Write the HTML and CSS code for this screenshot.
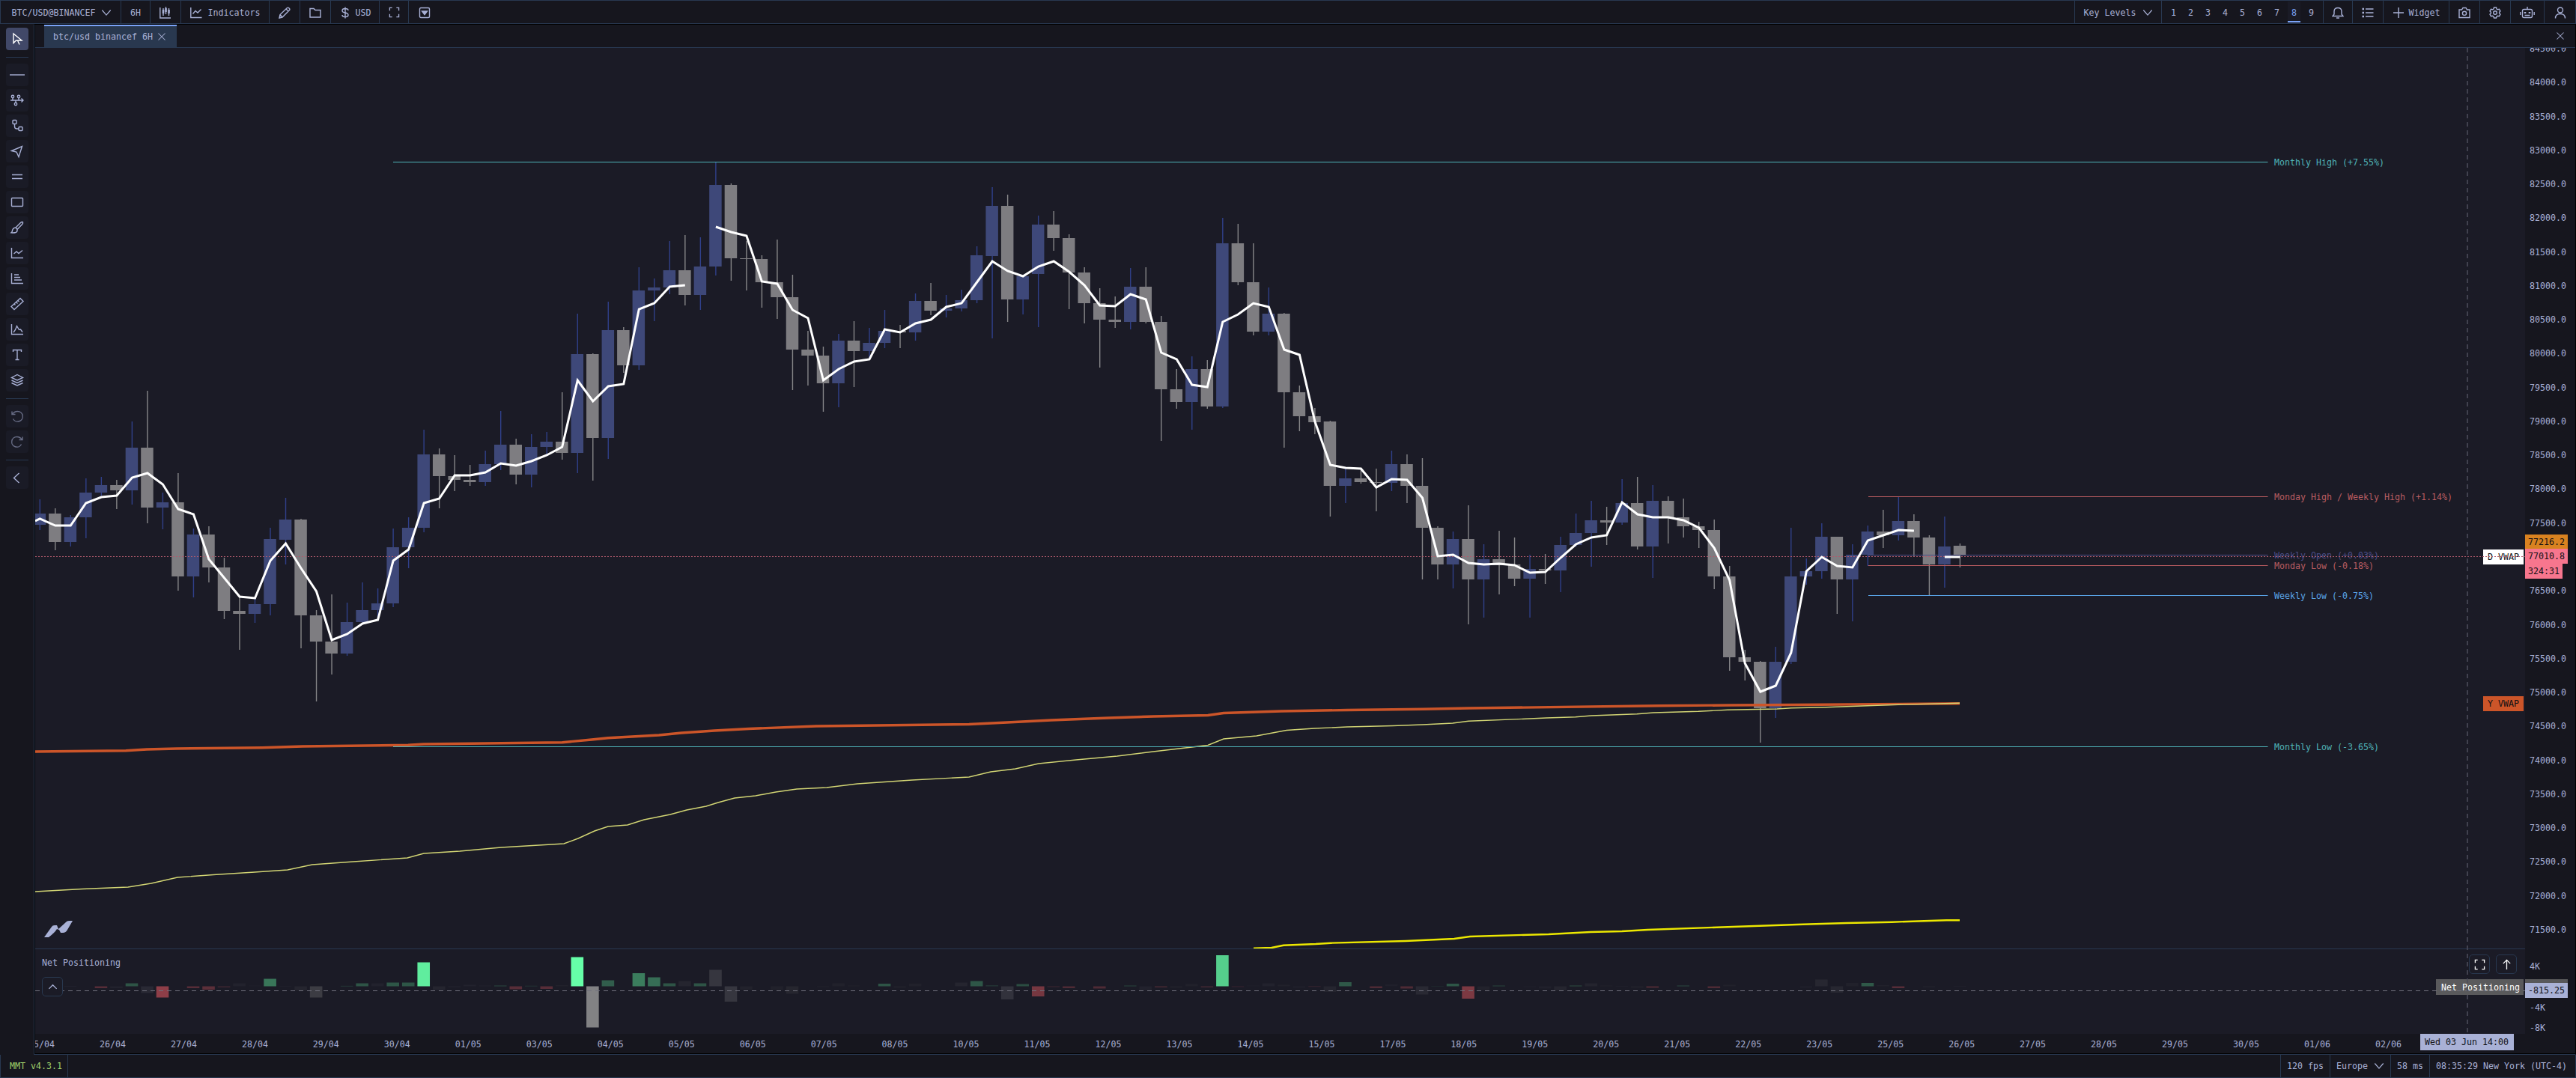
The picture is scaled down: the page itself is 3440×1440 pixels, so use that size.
FILE: index.html
```html
<!DOCTYPE html>
<html lang="en">
  <head>
    <meta charset="UTF-8" />
    <meta name="viewport" content="width=device-width, initial-scale=1.0" />
    <title>BTC/USD@BINANCEF 6H</title>
    <link rel="stylesheet" href="styles.css">
  </head>
  <body>
    <svg class="defs">
      <symbol id="i-chevron" viewBox="0 0 16 16"><path d="M1.5 4l6.5 7.5L14.500 4" /></symbol>
      <symbol id="i-candles" viewBox="0 0 16 16"><path d="M.8 1v14H15M5 2v10M8.500 0v10M12.500 2v10" /><path class="thick" d="M5 4v5M8.500 2v5M12.500 4v5" /></symbol>
      <symbol id="i-line" viewBox="0 0 16 16"><path d="M.8 1v13.500H15.500M3.500 9.500l3.500-4 3 2.500 4.500-4.500" /></symbol>
      <symbol id="i-pencil" viewBox="0 0 16 16"><path d="M1 15l1-4.500L11.500 1.500q1-.8 2 0l1 1q.8 1 0 2L5 14zM10 3l3 3M2 10.500L5 14" /></symbol>
      <symbol id="i-folder" viewBox="0 0 16 16"><path d="M1 2.500h5l2 2h7V14H1z" /></symbol>
      <symbol id="i-dollar" viewBox="0 0 16 16"><path d="M12 5q0-2.500-4-2.500T4 5.200q0 2 4 2.800t4 3q0 2.500-4 2.500T4 11M8 .5v15" /></symbol>
      <symbol id="i-full" viewBox="0 0 16 16"><path d="M1.500 5.500v-4H5M11 1.500h3.500v4M14.500 10.500v4H11M5 14.500H1.500v-4" /></symbol>
      <symbol id="i-boxdown" viewBox="0 0 16 16"><rect x="1.500" y="1.500" width="13" height="13" rx="1.500" /><path class="fill" d="M4.500 6h7L8 10.500z" /></symbol>
      <symbol id="i-bell" viewBox="0 0 16 16"><path d="M1 12.500h14l-2-2.500V6.500Q13 1.500 8 1.500T3 6.500V10zM6 15h4" /></symbol>
      <symbol id="i-list" viewBox="0 0 16 16"><path d="M5 3h10.500M5 8h10.500M5 13h10.500" /><path class="thick" d="M.5 3h2.500M.5 8h2.500M.5 13h2.500" /></symbol>
      <symbol id="i-plus" viewBox="0 0 16 16"><path d="M8 1v14M1 8h14" /></symbol>
      <symbol id="i-camera" viewBox="0 0 16 16"><path d="M1 4h3.500l1.500-2.500h4L11.500 4H15v10.500H1z" /><circle cx="8" cy="8.800" r="2.600" /></symbol>
      <symbol id="i-gear" viewBox="0 0 16 16"><path d="M6.500 1h3l.6 2 1.400.8 2-.5 1.500 2.600L13.600 7.300v1.400L15 10.100l-1.500 2.600-2-.5-1.400.8-.6 2h-3l-.6-2-1.400-.8-2 .5L1 10.100l1.400-1.400V7.300L1 5.900l1.500-2.600 2 .5L5.900 3z" /><circle cx="8" cy="8" r="2.300" /></symbol>
      <symbol id="i-robot" viewBox="0 0 20 16"><rect x="3.500" y="3.500" width="13" height="11" rx="2" /><path d="M10 0v3.500M.8 7v4M19.200 7v4M6.500 11.500h7" /><path class="thick" d="M7 7v2M13 7v2" /></symbol>
      <symbol id="i-user" viewBox="0 0 16 16"><circle cx="8" cy="4.500" r="3.500" /><path d="M1.500 15.500q0-6 6.500-6t6.500 6" /></symbol>
      <symbol id="i-x" viewBox="0 0 16 16"><path d="M2 2l12 12M14 2L2 14" /></symbol>
      <symbol id="i-cursor" viewBox="0 0 20 20"><path d="M5 3v12.500l3.500-3.500H16zM10.500 12l2.500 5.500" /></symbol>
      <symbol id="i-hline" viewBox="0 0 20 20"><path d="M0 10h20" /></symbol>
      <symbol id="i-path" viewBox="0 0 20 20"><path d="M1 10h17M4 6.500V10M12 6.500V10M8 10v3.500M15.500 7.500L18 10l-2.500 2.500" /><circle cx="4" cy="5" r="1.700" /><circle cx="12" cy="5" r="1.700" /><circle cx="8" cy="15" r="1.700" /></symbol>
      <symbol id="i-nodes" viewBox="0 0 20 20"><rect x="4" y="2.500" width="5" height="5" rx="1" /><rect x="12" y="11.500" width="5" height="5" rx="1" /><path d="M6.500 7.500V11q0 3 3 3H12" /></symbol>
      <symbol id="i-send" viewBox="0 0 20 20"><path d="M2.500 9.500L16.500 3.500 12 17.500 9 11z" /></symbol>
      <symbol id="i-parallel" viewBox="0 0 20 20"><path d="M3 7.500h14M3 12.500h14" /></symbol>
      <symbol id="i-rect" viewBox="0 0 20 20"><rect x="2.500" y="4.500" width="15" height="11" rx="1" /></symbol>
      <symbol id="i-brush" viewBox="0 0 20 20"><path d="M8 10l6.500-6.500q1.500-1.300 3-.8.5 1.500-1 3L10 12.500M8 10l2 2.500q.5 3-2 4-3 .8-6 .3 1.500-1 1.500-3 .8-3.300 4.500-3.800z" /></symbol>
      <symbol id="i-trend" viewBox="0 0 20 20"><path d="M2.500 3v13.500h15.500M5.500 11l3.500-3 3 2.500 5-4" /></symbol>
      <symbol id="i-profile" viewBox="0 0 20 20"><path d="M2.500 3v13.500h15.500M6 5h6M6 8.500h8M6 12h10" /></symbol>
      <symbol id="i-ruler" viewBox="0 0 20 20"><path d="M2 13.500L14 2.500l4 4-12 11zM6 10l1.500 1.500M8.500 7.500l2 2M11 5.500L12.500 7" /></symbol>
      <symbol id="i-peaks" viewBox="0 0 20 20"><path d="M2.500 3v13.500h15.500M5 14l2.500-3.500L9.500 5.500l3 5 2-.5 2.500 3.500" /></symbol>
      <symbol id="i-text" viewBox="0 0 20 20"><path d="M4.500 6V3.500h11V6M10 3.500v13M7.500 16.500h5" /></symbol>
      <symbol id="i-layers" viewBox="0 0 20 20"><path d="M10 2.500l7.500 4-7.500 3.500-7.500-3.500zM2.500 10l7.500 3.500 7.500-3.500M2.500 13.500L10 17l7.500-3.500" /></symbol>
      <symbol id="i-undo" viewBox="0 0 20 20"><path d="M3 3.500v4h4.500M3.500 7.500Q6 3.500 10.500 3.500A6.800 6.800 0 1 1 4.500 13.500" /></symbol>
      <symbol id="i-redo" viewBox="0 0 20 20"><path d="M17 3.500v4h-4.500M16.500 7.500Q14 3.500 9.500 3.500A6.800 6.800 0 1 0 15.500 13.500" /></symbol>
      <symbol id="i-left" viewBox="0 0 20 20"><path d="M12.500 4l-7 6.500 7 6.500" /></symbol>
      <symbol id="i-caret" viewBox="0 0 16 16"><path d="M2.500 10.500L8 5l5.500 5.500" /></symbol>
      <symbol id="i-up" viewBox="0 0 16 16"><path d="M8 15V1.500M3 6.500l5-5 5 5" /></symbol>
    </svg>

    <header class="topbar">
      <div class="cell symbol">BTC/USD@BINANCEF <svg class="icon chevron"><use href="#i-chevron" /></svg></div>
      <div class="cell">6H</div>
      <div class="cell"><svg class="icon"><use href="#i-candles" /></svg></div>
      <div class="cell indicators"><svg class="icon"><use href="#i-line" /></svg>Indicators</div>
      <div class="cell"><svg class="icon"><use href="#i-pencil" /></svg></div>
      <div class="cell"><svg class="icon"><use href="#i-folder" /></svg></div>
      <div class="cell usd"><svg class="icon"><use href="#i-dollar" /></svg>USD</div>
      <div class="cell narrow"><svg class="icon small"><use href="#i-full" /></svg></div>
      <div class="cell last"><svg class="icon"><use href="#i-boxdown" /></svg></div>
      <div class="spacer"></div>
      <div class="cell levels">Key Levels <svg class="icon chevron"><use href="#i-chevron" /></svg></div>
      <div class="cell pages">
        <span>1</span><span>2</span><span>3</span><span>4</span><span>5</span><span>6</span><span>7</span><span class="active">8</span><span>9</span>
      </div>
      <div class="cell narrow"><svg class="icon"><use href="#i-bell" /></svg></div>
      <div class="cell"><svg class="icon"><use href="#i-list" /></svg></div>
      <div class="cell widget"><svg class="icon"><use href="#i-plus" /></svg>Widget</div>
      <div class="cell"><svg class="icon"><use href="#i-camera" /></svg></div>
      <div class="cell"><svg class="icon gear"><use href="#i-gear" /></svg></div>
      <div class="cell robot"><svg class="icon"><use href="#i-robot" /></svg></div>
      <div class="cell"><svg class="icon"><use href="#i-user" /></svg></div>
    </header>

    <main class="main">
      <aside class="tools">
        <button class="tool active"><svg><use href="#i-cursor" /></svg></button>
        <hr />
        <button class="tool"><svg><use href="#i-hline" /></svg></button>
        <button class="tool"><svg><use href="#i-path" /></svg></button>
        <button class="tool"><svg><use href="#i-nodes" /></svg></button>
        <button class="tool"><svg><use href="#i-send" /></svg></button>
        <button class="tool"><svg><use href="#i-parallel" /></svg></button>
        <button class="tool"><svg><use href="#i-rect" /></svg></button>
        <button class="tool"><svg><use href="#i-brush" /></svg></button>
        <button class="tool"><svg><use href="#i-trend" /></svg></button>
        <button class="tool"><svg><use href="#i-profile" /></svg></button>
        <button class="tool"><svg><use href="#i-ruler" /></svg></button>
        <button class="tool"><svg><use href="#i-peaks" /></svg></button>
        <button class="tool"><svg><use href="#i-text" /></svg></button>
        <button class="tool"><svg><use href="#i-layers" /></svg></button>
        <hr />
        <button class="tool off"><svg><use href="#i-undo" /></svg></button>
        <button class="tool off"><svg><use href="#i-redo" /></svg></button>
        <hr />
        <button class="tool"><svg><use href="#i-left" /></svg></button>
      </aside>

      <section class="workspace">
        <div class="tabs">
          <div class="tab">btc/usd binancef 6H <svg class="icon"><use href="#i-x" /></svg></div>
          <svg class="icon close"><use href="#i-x" /></svg>
        </div>
        <div class="panes">
          <div class="plot">
            <svg id="chart" class="chart" viewBox="47 64 3325 1317"></svg>
            <button class="pane-btn collapse"><svg><use href="#i-caret" /></svg></button>
            <button class="pane-btn expand"><svg><use href="#i-full" /></svg></button>
            <button class="pane-btn up"><svg><use href="#i-up" /></svg></button>
          </div>
          <div class="axis">
            <div class="prices" id="prices"></div>
            <span class="scale k4">4K</span>
            <span class="scale k4n">-4K</span>
            <span class="scale k8n">-8K</span>
            <span class="tag mark">77216.2</span>
            <span class="tag last-price">77010.8</span>
            <span class="tag countdown">324:31</span>
            <span class="tag net-back"></span>
            <span class="tag net">-815.25</span>
          </div>
        </div>
        <div class="times">
          <div class="dates" id="dates"></div>
          <span class="tag cursor-date">Wed 03 Jun 14:00</span>
        </div>
      </section>
    </main>

    <footer class="status">
      <div class="version">MMT v4.3.1</div>
      <div class="spacer"></div>
      <div class="stat">120 fps</div>
      <div class="stat">Europe <svg class="icon chevron"><use href="#i-chevron" /></svg></div>
      <div class="stat">58 ms</div>
      <div class="stat">08:35:29 New York (UTC-4)</div>
    </footer>

    <script src="chart.js"></script>
  </body>
</html>
```
FILE: styles.css
```css
* {
  box-sizing: border-box;
}

body {
  display: flex;
  flex-direction: column;
  height: 1440px;
  margin: 0;
  overflow: hidden;
  background-color: #16161e;
  color: #a9b1d6;
  font-family: "DejaVu Sans Mono", monospace;
  font-size: 11.63px;
  line-height: 14px;
}

svg {
  fill: none;
  stroke: currentColor;
  stroke-width: 1.4;
}

.defs {
  display: none;
}

.thick {
  stroke-width: 2.6;
}

.fill {
  fill: currentColor;
}

.icon {
  width: 16px;
  height: 16px;
  flex: none;
}

.icon.small {
  width: 15px;
  height: 15px;
}

.icon.chevron {
  width: 14px;
  height: 14px;
}

.spacer {
  flex: 1;
}

/* top bar */
.topbar {
  display: flex;
  flex: none;
  height: 32px;
  border: 1px solid #283850;
}

.cell {
  display: flex;
  align-items: center;
  justify-content: center;
  width: 41px;
  padding-top: 1px;
  border-right: 1px solid #283850;
}

.topbar .cell:last-child {
  border-right: 0;
}

.cell.symbol {
  width: 161px;
  gap: 8px;
  padding-left: 3px;
}

.cell.symbol + .cell {
  width: 39px;
}

.cell.indicators {
  width: 118px;
  gap: 8px;
}

.cell.usd {
  width: 65px;
  gap: 6px;
}

.cell.narrow {
  width: 39px;
}

.cell.last {
  border-right: 0;
}

.cell.levels {
  width: 117px;
  gap: 8px;
  border-left: 1px solid #283850;
}

.cell.pages {
  width: 216px;
  padding: 0 4px;
}

.pages span {
  width: 23px;
  height: 30px;
  padding-top: 9px;
  text-align: center;
}

.pages .active {
  height: 28px;
  margin: 0 3px;
  width: 17px;
  padding-top: 8px;
  color: #7aa2f7;
  background-color: #1a1b26;
  border-bottom: 2px solid #7aa2f7;
}

.cell.widget {
  width: 88px;
  gap: 6px;
}

.cell.robot {
  width: 45px;
}

.robot .icon {
  width: 20px;
}

/* drawing tools */
.main {
  display: flex;
  flex: none;
  height: 1377px;
}

.tools {
  display: flex;
  flex-direction: column;
  align-items: center;
  gap: 4px;
  width: 45px;
  padding: 5px 0 0 1px;
}

.tools hr {
  width: 30px;
  height: 1px;
  margin: 5px 0 4px;
  border: 0;
  background-color: #283850;
}

.tool {
  display: flex;
  align-items: center;
  justify-content: center;
  width: 30px;
  height: 30px;
  padding: 0;
  border: 0;
  border-radius: 4px;
  color: #a9b1d6;
  background-color: #1a1b26;
}

.tool svg {
  width: 20px;
  height: 20px;
}

.tool.active {
  color: #fff;
  background-color: #414868;
}

.tool.off svg {
  opacity: 0.55;
}

/* workspace */
.workspace {
  display: flex;
  flex-direction: column;
  width: 3394px;
  height: 1376px;
  margin-left: 1px;
  border: 1px solid #000;
  box-shadow: -1px 1px 0 #283850;
}

.tabs {
  display: flex;
  flex: none;
  justify-content: space-between;
  align-items: center;
  height: 31px;
  padding: 0 14px 0 12px;
  border-bottom: 1px solid #283850;
}

.tab {
  display: flex;
  align-items: center;
  gap: 6px;
  width: 177px;
  height: 30px;
  padding: 0 0 1px 12px;
  border-top: 2px solid #7aa2f7;
  background-color: #29384f;
}

.tab .icon,
.close {
  width: 12px;
  height: 12px;
}

.panes {
  display: flex;
  flex: none;
  height: 1317px;
}

.plot {
  position: relative;
  flex: none;
  width: 3325px;
  background-color: #1b1b26;
}

.chart {
  display: block;
  width: 3325px;
  height: 1317px;
  stroke: none;
}

.chart text {
  font-size: 11.63px;
}

.pane-btn {
  position: absolute;
  display: flex;
  align-items: center;
  justify-content: center;
  width: 28px;
  height: 26px;
  padding: 0;
  border: 1px solid #283850;
  border-radius: 5px;
  color: #fff;
  background-color: #1b1b26;
}

.pane-btn svg {
  width: 15px;
  height: 15px;
}

.collapse {
  left: 9px;
  top: 1241px;
  color: #a9b1d6;
}

.expand {
  right: 47px;
  top: 1211px;
}

.up {
  right: 11px;
  top: 1211px;
}

.axis {
  position: relative;
  width: 67px;
  overflow: hidden;
}

.prices {
  display: flex;
  flex-direction: column;
  margin-top: -21px;
  padding-left: 6px;
  line-height: 45.27px;
}

.prices span {
  flex: none;
  height: 45.27px;
}

.scale,
.tag {
  position: absolute;
}

.scale {
  left: 6px;
}

.k4 {
  top: 1220px;
}

.k4n {
  top: 1275px;
}

.k8n {
  top: 1302px;
}

.tag {
  left: 0;
  width: 57px;
  height: 20px;
  padding-left: 4px;
  line-height: 20px;
  color: #101014;
}

.mark {
  top: 650px;
  background-color: #d98220;
}

.last-price {
  top: 669px;
  background-color: #f7768e;
}

.countdown {
  top: 689px;
  width: 50px;
  background-color: #f7768e;
}

.net-back {
  top: 1244px;
  background-color: #58585a;
}

.net {
  top: 1249px;
  background-color: #a9b1d6;
}

.times {
  position: relative;
  height: 26px;
  overflow: hidden;
}

.dates {
  display: flex;
  margin-left: -39px;
  padding-top: 7px;
}

.dates span {
  flex: none;
  width: 94.98px;
  text-align: center;
}

.cursor-date {
  left: 3185px;
  top: 0;
  width: 125px;
  height: 22px;
  padding-left: 6px;
  line-height: 23px;
  background-color: #a9b1d6;
}

/* footer */
.status {
  display: flex;
  flex: none;
  height: 31px;
  border: 1px solid #283850;
  border-top: 0;
  line-height: 31px;
}

.version {
  width: 90px;
  padding-left: 12px;
  border-right: 1px solid #283850;
  color: #9ece6a;
}

.stat {
  display: flex;
  align-items: center;
  gap: 8px;
  padding: 0 8px;
  border-left: 1px solid #283850;
}

.stat:last-child {
  padding-right: 11px;
}
```
FILE: chart.js
```js
const STEP = 20.513;
const X0 = 53.3;
const ZERO = 1317.5;
const cx = (i) => X0 + STEP * i;

// up/down, high, top, bottom, low
const candles = [
  ["u", 667, 686, 701, 708], ["d", 679, 686, 724, 735], ["u", 688, 691, 724, 730], ["u", 639, 658, 691, 719],
  ["u", 637, 648, 658, 662], ["d", 641, 648, 655, 680], ["u", 563, 598, 655, 674], ["d", 522, 598, 678, 699],
  ["u", 658, 671, 678, 707], ["d", 632, 671, 770, 789], ["u", 706, 714, 770, 798], ["d", 703, 714, 758, 778],
  ["d", 745, 758, 816, 827], ["d", 797, 816, 820, 868], ["u", 797, 807, 820, 832], ["u", 705, 720, 807, 822],
  ["u", 665, 694, 721, 754], ["d", 693, 694, 822, 866], ["d", 815, 822, 857, 937], ["d", 794, 857, 873, 901],
  ["u", 805, 831, 873, 876], ["u", 778, 815, 831, 833], ["u", 786, 806, 815, 828], ["u", 706, 731, 806, 811],
  ["u", 691, 705, 731, 759], ["u", 574, 607, 705, 711], ["d", 599, 607, 636, 679], ["d", 608, 636, 641, 656],
  ["d", 621, 641, 644, 649], ["u", 602, 620, 644, 649], ["u", 549, 594, 620, 628], ["d", 586, 594, 634, 647],
  ["u", 580, 597, 634, 651], ["u", 577, 590, 597, 607], ["d", 524, 590, 605, 614], ["u", 419, 473, 605, 632],
  ["d", 472, 473, 585, 642], ["u", 403, 441, 585, 613], ["d", 437, 441, 488, 498], ["u", 357, 388, 488, 494],
  ["u", 372, 384, 388, 429], ["u", 322, 361, 384, 393], ["d", 314, 361, 394, 408], ["u", 317, 356, 394, 414],
  ["u", 216, 247, 356, 368], ["d", 245, 247, 345, 375], ["d", 322, 345, 346, 388], ["d", 341, 346, 377, 411],
  ["d", 320, 377, 397, 426], ["d", 367, 397, 467, 521], ["d", 442, 467, 475, 515], ["d", 463, 475, 512, 550],
  ["u", 446, 455, 512, 544], ["d", 429, 455, 469, 517], ["u", 438, 458, 469, 479], ["u", 414, 442, 458, 465],
  ["d", 434, 442, 444, 465], ["u", 392, 402, 444, 455], ["d", 378, 402, 415, 421], ["u", 394, 412, 415, 424],
  ["u", 387, 401, 412, 416], ["u", 329, 341, 401, 405], ["u", 250, 275, 342, 452], ["d", 260, 275, 400, 430],
  ["u", 367, 369, 400, 420], ["u", 288, 300, 366, 437], ["d", 282, 300, 318, 335], ["d", 313, 318, 364, 413],
  ["d", 357, 364, 405, 432], ["d", 385, 405, 427, 491], ["d", 396, 427, 430, 438], ["u", 358, 383, 430, 440],
  ["d", 357, 383, 430, 432], ["d", 422, 430, 520, 589], ["d", 493, 520, 537, 546], ["u", 476, 493, 537, 574],
  ["d", 481, 493, 543, 546], ["u", 291, 325, 543, 545], ["d", 299, 325, 377, 381], ["d", 325, 377, 443, 448],
  ["u", 384, 419, 443, 448], ["d", 418, 419, 524, 598], ["d", 515, 524, 556, 576], ["d", 545, 556, 564, 580],
  ["d", 562, 563, 649, 690], ["u", 626, 639, 649, 672], ["d", 626, 639, 644, 646], ["d", 626, 644, 645, 683],
  ["u", 602, 620, 645, 656], ["d", 607, 620, 649, 672], ["d", 612, 649, 705, 774], ["d", 703, 705, 754, 774],
  ["u", 710, 720, 754, 786], ["d", 675, 720, 774, 834], ["u", 727, 747, 774, 825], ["d", 709, 747, 755, 794],
  ["d", 718, 754, 773, 783], ["u", 741, 760, 773, 825], ["d", 740, 760, 762, 780], ["u", 717, 728, 762, 791],
  ["u", 686, 712, 728, 730], ["u", 669, 695, 712, 757], ["d", 677, 695, 698, 728], ["u", 640, 672, 698, 701],
  ["d", 637, 672, 730, 734], ["u", 648, 669, 730, 772], ["d", 663, 669, 691, 726], ["d", 666, 691, 703, 718],
  ["d", 697, 703, 708, 732], ["d", 694, 708, 770, 787], ["d", 756, 770, 878, 896], ["d", 868, 878, 884, 909],
  ["d", 883, 884, 946, 992], ["u", 864, 884, 946, 959], ["u", 705, 770, 884, 887], ["u", 746, 763, 770, 781],
  ["u", 699, 717, 763, 773], ["d", 717, 717, 774, 820], ["u", 727, 741, 774, 830], ["u", 702, 710, 741, 756],
  ["d", 681, 710, 715, 732], ["u", 664, 696, 715, 722], ["d", 687, 696, 718, 743], ["d", 715, 718, 754, 795],
  ["u", 690, 730, 754, 785], ["d", 726, 729, 741, 758],
];

// daily vwap, one value per candle, broken where a segment ends
const vwap = [
  693, 702, 702, 672, 664, 662, 638, 632, 647, 680, 687, 747, 772, 797, 799, 749, 726, 759, 790, 855,
  847, 833, 828, 749, 734, 672, 666, 635, 635, 631, 619, 622, 616, 608, 597, 508, 536, 516, 513, 413,
  405, 383, 381, null, 303, 310, 315, 376, 379, 414, 425, 508, 493, 483, 480, 440, 444, 432, 427, 410,
  405, 377, 349, 362, 369, 356, 349, 363, 381, 408, 409, 393, 400, 471, 480, 514, 517, 430, 420, 405,
  410, 467, 474, 563, 621, 625, 626, 651, 640, 641, 665, 743, 741, 752, 754, 753, 755, 765, 764, 745,
  727, 718, 715, 671, 687, 691, 691, 695, 705, 732, 775, 886, 924, 916, 872, 763, 744, 756, 758, 722,
  715, 708, 709, null, 744, 744,
];

const yearly =
  "47,1004 168,1002.700 196,1001 236,1000 350,998.700 404,997 545,995.300 566,994 751,991.700 790,988 812,985.700 880,982 910,979 954,976 1000,973.500 1090,970 1294,967.500 1345,965 1404,962 1480,959 1540,957 1613,955.500 1634,952.500 1711,950 1799,948.500 1900,947.300 1961,946 2215,942.700 2312,942 2433,941.300 2617,939.700";
const thin =
  "47,1191 110,1187.500 171,1185 202,1180 237,1172 285,1168.500 340,1165 384,1162 417,1155 472,1151 544,1146 566,1140 614,1137 669,1132 753,1127 772,1120 794,1110 812,1104 838,1102 860,1095 895,1088 917,1082 943,1077 959,1072 981,1066 1009,1063 1036,1058 1064,1054 1104,1052 1145,1047 1218,1042 1294,1038 1323,1031 1356,1027 1387,1020 1437,1015 1492,1010 1540,1004 1613,995.500 1634,987 1678,983 1718,975.500 1755,973 1799,971 1860,969.500 1900,968 1940,966 1961,963.300 2043,960 2065,959 2104,957.700 2125,956 2186,953.700 2208,952 2268,950.300 2307,948.300 2373,947 2392,945.700 2438,944.700 2535,941.300 2598,939.700 2617,939.300";
const monthly =
  "1674,1266.700 1698,1266 1714,1262.700 1757,1261 1777,1259.700 1877,1257 1942,1254 1963,1251 2040,1248.700 2068,1248 2124,1245 2166,1244 2200,1242 2300,1238.500 2400,1235 2466,1233 2526,1231.700 2599,1229.300 2617,1229.300";

const levels = [
  ["Monthly High (+7.55%)", 216.5, 525, "#4fb3b8"],
  ["Monthly Low (-3.65%)", 997.5, 525, "#4fb3b8"],
  ["Monday High / Weekly High (+1.14%)", 663.5, 2495, "#b95c60"],
  ["Weekly Open (+0.03%)", 741.5, 2495, "#4a4d86"],
  ["Monday Low (-0.18%)", 755.5, 2495, "#b95c60"],
  ["Weekly Low (-0.75%)", 795.5, 2495, "#5aa5e8"],
];

const tones = { g: "#66ffa8", r: "#e65a62", n: "#828284" };
// candle index, height, tone, opacity
const net = [
  [2, 0.5, "n", 0.15], [4, -2.5, "r", 0.3], [5, -2.5, "n", 0.08], [6, 4, "g", 0.25], [7, -9, "n", 0.15],
  [8, -15, "r", 0.57], [10, -2.5, "r", 0.3], [11, -4.5, "r", 0.32], [12, -1.5, "r", 0.18], [13, 4, "n", 0.08],
  [14, 1, "n", 0.05], [15, 10, "g", 0.4], [16, 0.5, "n", 0.1], [17, -5.5, "n", 0.1], [18, -15, "n", 0.32],
  [20, 0.6, "g", 0.2], [21, 4, "g", 0.25], [22, 4, "n", 0.08], [23, 5, "g", 0.26], [24, 5, "g", 0.26],
  [25, 32, "g", 0.92], [26, -5, "n", 0.1], [27, -1, "n", 0.1], [28, 2, "n", 0.08], [29, 1, "n", 0.08],
  [30, 1, "g", 0.2], [31, -4, "r", 0.3], [32, 0.7, "g", 0.15], [33, -3.5, "r", 0.3], [34, 1.5, "n", 0.06],
  [35, 39, "g", 1], [36, -55, "n", 1], [37, 8, "g", 0.29], [39, 17.5, "g", 0.43], [40, 12, "g", 0.36],
  [41, 4, "g", 0.25], [42, 7, "n", 0.1], [43, 4, "g", 0.25], [44, 22, "n", 0.27], [45, -20.5, "n", 0.27],
  [46, -4.5, "n", 0.07], [48, -5, "n", 0.06], [49, -10, "n", 0.11], [51, -1, "n", 0.06], [52, 4, "n", 0.06],
  [53, 1, "n", 0.06], [55, 3.5, "g", 0.25], [56, -2, "n", 0.06], [57, 3.5, "n", 0.06], [60, 5, "n", 0.1],
  [61, 7, "g", 0.26], [62, 1.3, "g", 0.13], [63, -17.5, "n", 0.23], [64, 3, "g", 0.22], [65, -13.5, "r", 0.45],
  [66, -1, "r", 0.18], [67, -2.5, "r", 0.25], [69, -3, "r", 0.25], [71, 1, "g", 0.18], [72, -5.5, "n", 0.08],
  [73, -1.5, "r", 0.22], [74, -2, "n", 0.06], [75, 3, "n", 0.06], [76, -1.5, "r", 0.2], [77, 41.500, "g", 0.79],
  [78, -1, "r", 0.15], [79, 1, "n", 0.05], [80, 4, "n", 0.08], [81, 2, "n", 0.06], [82, -2, "n", 0.05],
  [83, -0.7, "r", 0.2], [84, -7.5, "n", 0.1], [85, 5.5, "g", 0.27], [87, -2.5, "r", 0.25], [88, 2.5, "n", 0.05],
  [89, -3, "r", 0.25], [90, -11, "n", 0.14], [91, 0.5, "g", 0.1], [92, 3.5, "g", 0.26], [93, -16.5, "r", 0.48],
  [94, -5, "n", 0.07], [95, 1, "g", 0.18], [97, -1, "n", 0.05], [98, -3, "n", 0.05], [99, -5.500, "n", 0.1],
  [100, 1, "g", 0.22], [101, 4, "n", 0.09], [102, 1, "n", 0.06], [103, -0.7, "n", 0.1], [104, -2, "n", 0.06],
  [105, -2, "r", 0.25], [107, 1, "g", 0.2], [109, -2.5, "r", 0.25], [110, 2, "n", 0.06], [115, -2, "n", 0.05],
  [116, 9, "n", 0.12], [117, -8.5, "n", 0.12], [118, 4.5, "n", 0.06], [119, 4.5, "g", 0.27], [120, 1.5, "n", 0.06],
  [121, -2.5, "r", 0.3], [123, -1.5, "n", 0.06], [125, 0.5, "n", 0.1],
];

const line = (x1, y1, x2, y2, stroke, width, extra = "") =>
  `<line x1="${x1}" y1="${y1}" x2="${x2}" y2="${y2}" stroke="${stroke}" stroke-width="${width}" ${extra}/>`;
const rect = (x, y, w, h, fill, extra = "") =>
  `<rect x="${x}" y="${y}" width="${w}" height="${h}" fill="${fill}" ${extra}/>`;
const poly = (points, stroke, width) =>
  `<polyline points="${points}" fill="none" stroke="${stroke}" stroke-width="${width}" />`;
const text = (x, y, fill, value) => `<text x="${x}" y="${y}" fill="${fill}">${value}</text>`;

let out = "";

candles.forEach(([dir, high, top, bottom, low], i) => {
  const x = cx(i);
  out += line(x, high, x, low, dir === "u" ? "#30408a" : "#868688", 1.4);
  out += rect(x - 8.7, top, 16.5, Math.max(bottom - top, 1), dir === "u" ? "#3e4879" : "#7e7d81");
});

out += poly(yearly, "#cc5529", 3.4);
out += poly(thin, "#d2d574", 1.4);
out += poly(monthly, "#ece800", 2.4);

levels.forEach(([name, y, x, color]) => {
  out += line(x, y, 3028.5, y, color, 1);
  out += text(3037, y + 4, color, name);
});

out += rect(3316, 734, 54, 20, "#fff") + text(3322, 748, "#101014", "D VWAP");
out += rect(3316, 930, 54, 20, "#cc5529") + text(3322, 944, "#101014", "Y VWAP");
out += line(47, 743.5, 3372, 743.5, "#b05a6c", 1, 'stroke-dasharray="2 2"');

let segment = `47,696 `;
vwap.concat(null).forEach((y, i) => {
  if (y === null) {
    out += poly(segment, "#fff", 3);
    segment = "";
  } else {
    segment += `${cx(i).toFixed(1)},${y} `;
  }
});

// logo
out += '<path d="M59 1252L69 1238Q70 1236 73 1236H76L78 1241 89 1231Q90 1230 93 1230H97L90 1242Q88 1246 84 1246H81L79 1242 76 1241Q73 1246 65 1252z" fill="#a9b1d6" />';

// net positioning pane
out += line(47, 1267.5, 3372, 1267.5, "#283850", 1);
out += text(56, 1290, "#a9b1d6", "Net Positioning");
net.forEach(([i, value, tone, opacity]) => {
  const y = value > 0 ? ZERO - value : ZERO;
  out += rect(cx(i) - 8.7, y, 16.6, Math.abs(value), tones[tone], `opacity="${opacity}"`);
});
out += rect(3253, 1308, 117, 21, "#5a5a5c") + text(3260, 1322.500, "#fff", "Net Positioning");
out += line(47, 1323.5, 3372, 1323.5, "#71717d", 1, 'stroke-dasharray="6 5"');
out += line(3295, 64, 3295, 1381, "#4b4c5a", 1.6, 'stroke-dasharray="6 5"');

document.getElementById("chart").innerHTML = out;

const prices = document.getElementById("prices");
for (let p = 84500; p >= 71500; p -= 500) {
  prices.innerHTML += `<span>${p === 77000 ? "" : p.toFixed(1)}</span>`;
}

const days = (
  "25/04 26/04 27/04 28/04 29/04 30/04 01/05 03/05 04/05 05/05 06/05 07/05 08/05 10/05 11/05 12/05 13/05 " +
  "14/05 15/05 17/05 18/05 19/05 20/05 21/05 22/05 23/05 25/05 26/05 27/05 28/05 29/05 30/05 01/06 02/06"
).split(" ");
document.getElementById("dates").innerHTML = days.map((d) => `<span>${d}</span>`).join("");
```
